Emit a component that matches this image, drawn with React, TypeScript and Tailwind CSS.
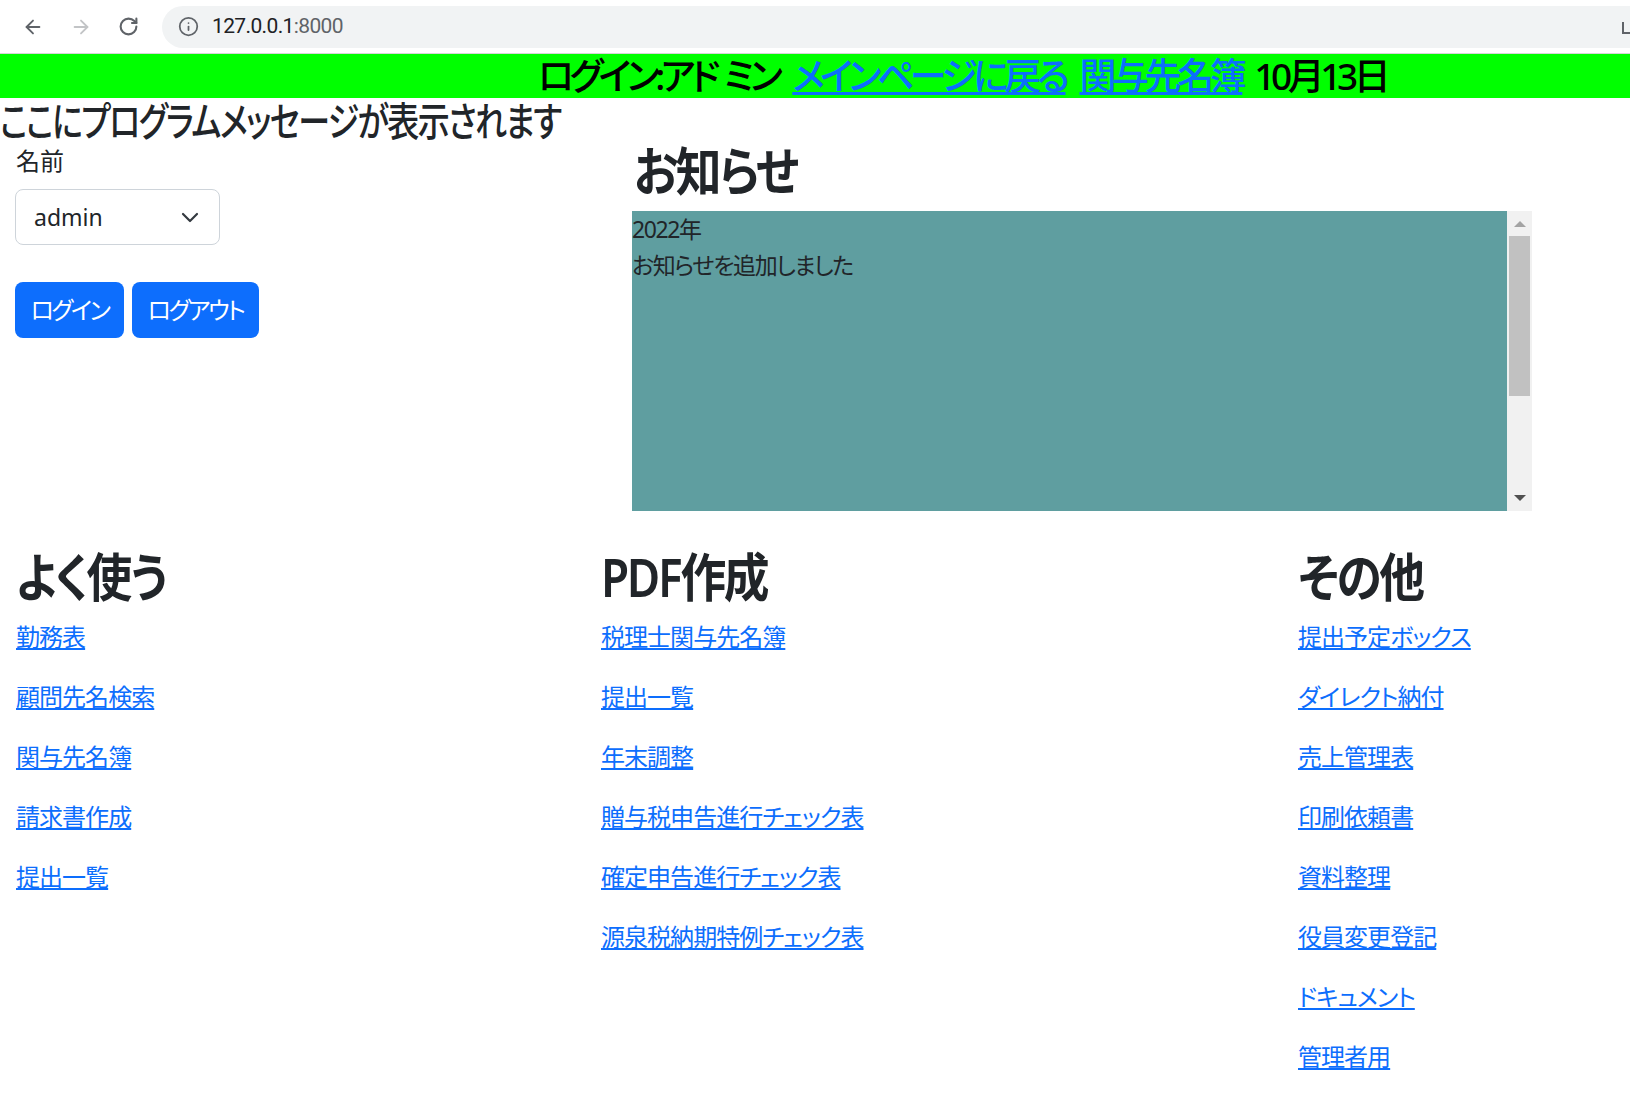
import React from "react";
import { ArrowLeft, ArrowRight, RotateCw, Info } from "lucide-react";

const often = ["勤務表", "顧問先名検索", "関与先名簿", "請求書作成", "提出一覧"];
const pdf = [
  "税理士関与先名簿",
  "提出一覧",
  "年末調整",
  "贈与税申告進行チェック表",
  "確定申告進行チェック表",
  "源泉税納期特例チェック表",
];
const others = [
  "提出予定ボックス",
  "ダイレクト納付",
  "売上管理表",
  "印刷依頼書",
  "資料整理",
  "役員変更登記",
  "ドキュメント",
  "管理者用",
];

function LinkColumn({ title, items }: { title: string; items: string[] }) {
  return (
    <div>
      <h1 className="text-[52px] leading-[68px] font-semibold text-[#212529] mb-[8px] tracking-[-0.05em] origin-left scale-x-[0.88]">
        {title}
      </h1>
      {items.map((t, i) => (
        <p key={i} className="text-[24px] leading-[36px] mb-[24px]">
          <a href="#" className="text-[#0d6efd] underline tracking-[-0.04em]">
            {t}
          </a>
        </p>
      ))}
    </div>
  );
}

export default function App() {
  return (
    <div className="w-[1630px] h-[1105px] overflow-hidden bg-white text-[#212529] font-['Noto_Sans','Noto_Sans_CJK_JP',sans-serif] [font-feature-settings:'palt']">
      {/* browser toolbar */}
      <div className="h-[54px] flex items-center border-b border-[#d6d6d6]">
        <div className="w-[162px] flex items-center pl-[22px] gap-[26px]">
          <ArrowLeft size={22} strokeWidth={2} color="#5f6368" />
          <ArrowRight size={22} strokeWidth={2} color="#c2c4c6" />
          <RotateCw size={21} strokeWidth={2.4} color="#5f6368" />
        </div>
        <div className="flex-1 h-[42px] bg-[#f1f3f4] rounded-l-full flex items-center pl-[16px] relative">
          <Info size={21} strokeWidth={2} color="#5f6368" />
          <span className="ml-[13px] text-[21px] tracking-[-0.03em] font-['Roboto',sans-serif] text-[#202124]">
            127.0.0.1<span className="text-[#5f6368]">:8000</span>
          </span>
          <div className="absolute right-[-4px] top-[16px] w-[12px] h-[12px] border-l-2 border-b-2 border-[#5f6368]"></div>
        </div>
      </div>

      {/* status bar */}
      <div className="h-[44px] bg-[#00ff00] pl-[538px] text-[37px] leading-[44px] font-medium text-black tracking-[-0.12em] whitespace-nowrap">
        ログイン:アド<span className="ml-[8px]">ミン</span>
        <a href="#" className="ml-[14px] text-[#0d6efd] underline">
          メインページに戻る
        </a>
        <a href="#" className="ml-[14px] text-[#0d6efd] underline">
          関与先名簿
        </a>
        <span className="ml-[12px]">10月13日</span>
      </div>

      <h2 className="h-[45px] text-[40px] leading-[45px] font-medium tracking-[-0.05em] whitespace-nowrap origin-left scale-x-[0.8]">
        ここにプログラムメッセージが表示されます
      </h2>

      <div className="flex">
        <div className="w-[632px] pl-[15px]">
          <label className="block pl-[1px] text-[24px] leading-[36px] mb-[10px]">名前</label>
          <div className="w-[205px] h-[56px] border-[1.5px] border-[#ced4da] rounded-[8px] flex items-center justify-between pl-[18px] pr-[20px]">
            <span className="text-[23px]">admin</span>
            <svg width="18" height="12" viewBox="0 0 18 12" fill="none">
              <path d="M2 3l7 7 7-7" stroke="#343a40" strokeWidth="2.2" strokeLinecap="round" strokeLinejoin="round" />
            </svg>
          </div>
          <div className="flex gap-[8px] mt-[37px]">
            <button className="w-[109px] h-[56px] bg-[#0d6efd] text-white rounded-[8px] text-[24px] tracking-[-0.1em]">
              ログイン
            </button>
            <button className="w-[127px] h-[56px] bg-[#0d6efd] text-white rounded-[8px] text-[24px] tracking-[-0.1em]">
              ログアウト
            </button>
          </div>
        </div>

        <div className="flex-1">
          <h1 className="pl-[2px] text-[52px] leading-[56px] font-semibold mb-[12px] tracking-[-0.05em] origin-left scale-x-[0.88]">
            お知らせ
          </h1>
          <div className="w-[900px] h-[300px] flex">
            <div className="flex-1 bg-[#5f9ea0] text-[23px] leading-[36px] tracking-[-0.06em]">
              <div>2022年</div>
              <div>お知らせを追加しました</div>
            </div>
            <div className="w-[25px] bg-[#f1f1f1] flex flex-col items-center">
              <div className="mt-[10px] w-0 h-0 border-l-[6px] border-r-[6px] border-b-[6px] border-l-transparent border-r-transparent border-b-[#a3a3a3]"></div>
              <div className="mt-[9px] w-[21px] h-[160px] bg-[#c1c1c1]"></div>
              <div className="mt-auto mb-[10px] w-0 h-0 border-l-[6px] border-r-[6px] border-t-[6px] border-l-transparent border-r-transparent border-t-[#505050]"></div>
            </div>
          </div>
        </div>
      </div>

      <div className="grid grid-cols-[585px_697px_1fr] pl-[16px] mt-[32px]">
        <LinkColumn title="よく使う" items={often} />
        <LinkColumn title="PDF作成" items={pdf} />
        <LinkColumn title="その他" items={others} />
      </div>
    </div>
  );
}
